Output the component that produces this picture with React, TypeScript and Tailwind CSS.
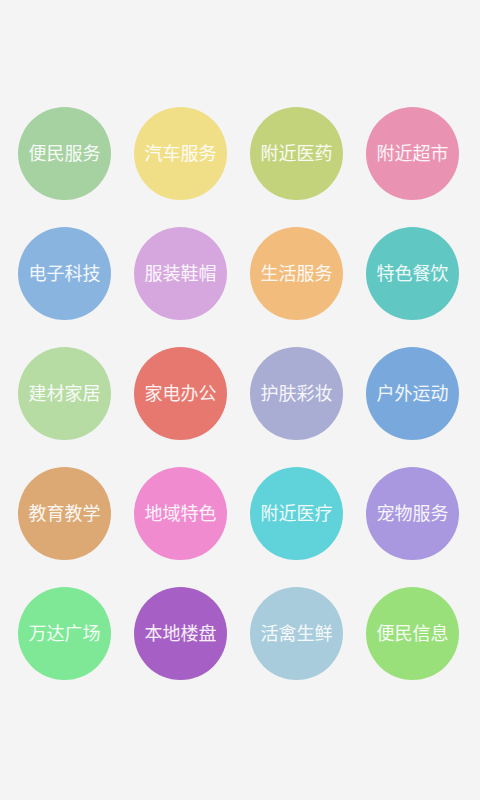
import React from 'react';

interface Category {
  name: string;
  color: string;
}

const categories: Category[] = [
  { name: '便民服务', color: 'bg-[#a6d1a1]' },
  { name: '汽车服务', color: 'bg-[#f1df88]' },
  { name: '附近医药', color: 'bg-[#c3d37c]' },
  { name: '附近超市', color: 'bg-[#ea92b1]' },
  { name: '电子科技', color: 'bg-[#89b4e0]' },
  { name: '服装鞋帽', color: 'bg-[#d6a7df]' },
  { name: '生活服务', color: 'bg-[#f2bc7c]' },
  { name: '特色餐饮', color: 'bg-[#61c7c3]' },
  { name: '建材家居', color: 'bg-[#b6dba3]' },
  { name: '家电办公', color: 'bg-[#e67870]' },
  { name: '护肤彩妆', color: 'bg-[#a9acd3]' },
  { name: '户外运动', color: 'bg-[#79a9dc]' },
  { name: '教育教学', color: 'bg-[#dca873]' },
  { name: '地域特色', color: 'bg-[#f08bd0]' },
  { name: '附近医疗', color: 'bg-[#60d2da]' },
  { name: '宠物服务', color: 'bg-[#a997e0]' },
  { name: '万达广场', color: 'bg-[#7ee896]' },
  { name: '本地楼盘', color: 'bg-[#a660c5]' },
  { name: '活禽生鲜', color: 'bg-[#a8ccdc]' },
  { name: '便民信息', color: 'bg-[#99e07b]' },
];

const App: React.FC = () => {
  return (
    <div
      className="min-h-[800px] w-[480px] bg-[#f4f4f4] pt-[107px] pl-[18px]"
      style={{ fontFamily: '"Noto Sans CJK SC", "Noto Sans", sans-serif' }}
    >
      <div className="grid grid-cols-[repeat(4,93px)] gap-x-[23px] gap-y-[27px]">
        {categories.map((c) => (
          <div
            key={c.name}
            className={`${c.color} w-[93px] h-[93px] rounded-full flex items-center justify-center`}
          >
            <span className="-mt-[3px] text-[18px] leading-none text-white/90">
              {c.name}
            </span>
          </div>
        ))}
      </div>
    </div>
  );
};

export default App;
